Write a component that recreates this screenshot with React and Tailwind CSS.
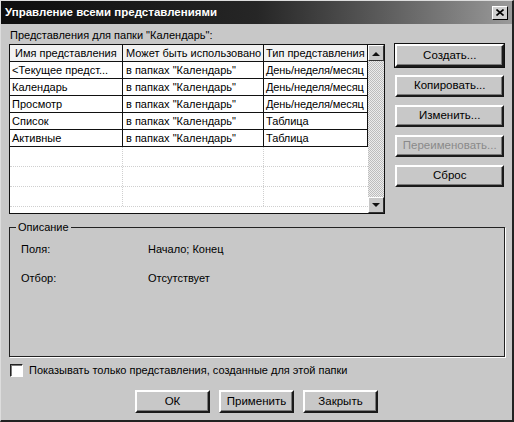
import React from "react";

const font = { fontFamily: '"Liberation Sans", Arial, sans-serif' };

const rows = [
  { name: "<Текущее предст...", where: 'в папках "Календарь"', type: "День/неделя/месяц" },
  { name: "Календарь", where: 'в папках "Календарь"', type: "День/неделя/месяц" },
  { name: "Просмотр", where: 'в папках "Календарь"', type: "День/неделя/месяц" },
  { name: "Список", where: 'в папках "Календарь"', type: "Таблица" },
  { name: "Активные", where: 'в папках "Календарь"', type: "Таблица" },
];

const Button = ({ children, disabled, className = "" }) => (
  <div
    className={`flex items-center justify-center border-t-2 border-l-2 border-b-2 border-r-2 border-t-white border-l-white border-b-[#1a1a1a] border-r-[#1a1a1a] bg-[#c8c8c8] text-[11.5px] shadow-[inset_-1px_-1px_0_#7a7a7a] ${
      disabled ? "text-[#8a8a8a]" : "text-black"
    } ${className}`}
  >
    {children}
  </div>
);

const ScrollArrow = ({ down }) => (
  <div className="flex h-[16px] w-[16px] items-center justify-center border border-t-white border-l-white border-b-[#333] border-r-[#333] bg-[#c8c8c8]">
    <svg width="8" height="5" viewBox="0 0 8 5">
      {down ? <polygon points="0,0 8,0 4,4" fill="#111" /> : <polygon points="0,5 8,5 4,1" fill="#111" />}
    </svg>
  </div>
);

export default function App() {
  return (
    <div
      className="flex h-[422px] w-[514px] flex-col border-b-2 border-r-2 border-b-[#222] border-r-[#222] border-t border-l border-t-[#ddd] border-l-[#ddd] bg-[#c8c8c8]"
      style={font}
    >
      {/* Title bar */}
      <div className="flex h-[23px] items-center justify-between bg-gradient-to-r from-[#0e0e0e] via-[#262626] to-[#9a9a9a] pl-[4px] pr-[4px]">
        <span className="text-[11.5px] font-bold text-white">Управление всеми представлениями</span>
        <div className="flex h-[14px] w-[16px] items-center justify-center border border-t-white border-l-white border-b-black border-r-black bg-[#d0d0d0]">
          <svg width="8" height="7" viewBox="0 0 8 7">
            <path d="M0.5 0.5 L7.5 6.5 M7.5 0.5 L0.5 6.5" stroke="#000" strokeWidth="1.6" />
          </svg>
        </div>
      </div>

      <div className="flex flex-1 flex-col px-[8px] text-[11px]">
        <div className="flex">
          {/* Left: list */}
          <div className="flex w-[378px] flex-col">
            <div className="mt-[4px] h-[14px] leading-[14px] text-black pl-[1px]">
              Представления для папки "Календарь":
            </div>
            <div className="mt-[2px] flex h-[170px] border border-[#111] bg-white">
              <div className="flex flex-1 flex-col overflow-hidden">
                <div className="flex h-[17px] border-b border-[#111] bg-[#f2f2f2] leading-[16px] whitespace-nowrap">
                  <div className="w-[113px] border-r border-[#111] pl-[5px] overflow-hidden">Имя представления</div>
                  <div className="w-[141px] border-r border-[#111] pl-[3px] overflow-hidden">Может быть использовано</div>
                  <div className="flex-1 border-r border-[#111] pl-[2px] overflow-hidden">Тип представления</div>
                </div>
                {rows.map((r) => (
                  <div key={r.name} className="flex h-[17px] border-b border-[#111] leading-[16px] whitespace-nowrap">
                    <div className="w-[113px] border-r border-[#111] pl-[2px] overflow-hidden">{r.name}</div>
                    <div className="w-[141px] border-r border-[#111] pl-[3px] overflow-hidden">{r.where}</div>
                    <div className="flex-1 border-r border-[#111] pl-[2px] overflow-hidden tracking-[-0.1px]">{r.type}</div>
                  </div>
                ))}
                {[0, 1, 2].map((i) => (
                  <div key={i} className="flex h-[20px] border-b border-dotted border-[#cfcfcf]">
                    <div className="w-[113px] border-r border-dotted border-[#cfcfcf]" />
                    <div className="w-[141px] border-r border-dotted border-[#cfcfcf]" />
                    <div className="flex-1" />
                  </div>
                ))}
              </div>
              {/* Scrollbar */}
              <div className="flex w-[16px] flex-col justify-between bg-[repeating-conic-gradient(#bdbdbd_0%_25%,#ececec_0%_50%)] bg-[length:2px_2px]">
                <ScrollArrow />
                <ScrollArrow down />
              </div>
            </div>
          </div>

          {/* Right: buttons */}
          <div className="ml-[10px] mt-[20px] flex w-[109px] flex-col gap-[8px]">
            <Button className="h-[23px] outline outline-1 outline-[#111]">Создать...</Button>
            <Button className="h-[22px]">Копировать...</Button>
            <Button className="h-[22px]">Изменить...</Button>
            <Button className="h-[22px]" disabled>
              Переименовать...
            </Button>
            <Button className="h-[22px]">Сброс</Button>
          </div>
        </div>

        {/* Description group */}
        <div className="relative mt-[13px] h-[130px] w-[496px] border border-[#222] shadow-[1px_1px_0_#fff]">
          <span className="absolute -top-[8px] left-[6px] bg-[#c8c8c8] px-[2px] leading-[15px]">Описание</span>
          <div className="mt-[14px] flex flex-col gap-[15px] pl-[11px] leading-[14px]">
            <div className="flex">
              <span className="w-[127px]">Поля:</span>
              <span>Начало; Конец</span>
            </div>
            <div className="flex">
              <span className="w-[127px]">Отбор:</span>
              <span>Отсутствует</span>
            </div>
          </div>
        </div>

        {/* Checkbox */}
        <div className="mt-[6px] flex items-center gap-[6px] pl-[1px]">
          <div className="h-[13px] w-[13px] border border-t-[#222] border-l-[#222] border-b-white border-r-white bg-white shadow-[inset_1px_1px_0_#7a7a7a]" />
          <span className="leading-[14px]">Показывать только представления, созданные для этой папки</span>
        </div>

        {/* Bottom buttons */}
        <div className="mt-[13px] flex justify-center gap-[9px]">
          <Button className="h-[23px] w-[75px]">ОК</Button>
          <Button className="h-[23px] w-[75px]">Применить</Button>
          <Button className="h-[23px] w-[75px]">Закрыть</Button>
        </div>
      </div>
    </div>
  );
}
